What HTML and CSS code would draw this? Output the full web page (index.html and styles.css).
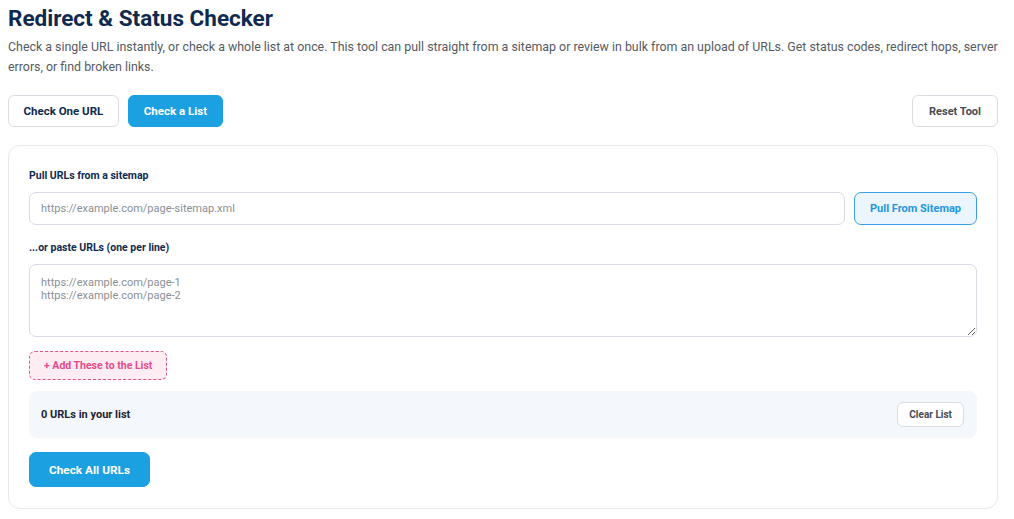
FILE: index.html
```html
<!DOCTYPE html>
<html lang="en">
<head>
<meta charset="utf-8">
<title>Redirect &amp; Status Checker</title>
<link rel="stylesheet" href="styles.css">
</head>
<body>
<div class="page">
  <h1 class="title">Redirect &amp; Status Checker</h1>
  <p class="intro">Check a single URL instantly, or check a whole list at once. This tool can pull straight from a sitemap or review in bulk from an upload of URLs. Get status codes, redirect hops, server errors, or find broken links.</p>
  <div class="toolbar">
    <div class="tabs">
      <button class="btn btn-outline">Check One URL</button>
      <button class="btn btn-primary">Check a List</button>
    </div>
    <button class="btn btn-outline btn-reset">Reset Tool</button>
  </div>
  <div class="card">
    <label class="label">Pull URLs from a sitemap</label>
    <div class="row">
      <input class="input" type="text" placeholder="https://example.com/page-sitemap.xml">
      <button class="btn btn-light">Pull From Sitemap</button>
    </div>
    <label class="label label-2">...or paste URLs (one per line)</label>
    <textarea class="textarea" placeholder="https://example.com/page-1&#10;https://example.com/page-2"></textarea>
    <button class="btn btn-add">+ Add These to the List</button>
    <div class="listbox">
      <span class="count">0 URLs in your list</span>
      <button class="btn btn-clear">Clear List</button>
    </div>
    <button class="btn btn-primary btn-check">Check All URLs</button>
  </div>
</div>
</body>
</html>
```

FILE: styles.css
```css
* { box-sizing: border-box; }
body {
  margin: 0;
  font-family: Roboto, "Liberation Sans", sans-serif;
  background: #ffffff;
  color: #0f2a4f;
}
.page {
  padding: 4px 16px 0 8px;
}
.title {
  margin: 0;
  font-size: 22.5px;
  line-height: 28px;
  font-weight: 700;
  color: #0f2a4f;
}
.intro {
  margin: 5px 0 0;
  font-size: 12.4px;
  line-height: 20px;
  color: #555b63;
}
.toolbar {
  display: flex;
  justify-content: space-between;
  align-items: center;
  margin-top: 18px;
}
.tabs { display: flex; gap: 9px; }
.btn {
  font-family: Roboto, "Liberation Sans", sans-serif;
  font-weight: 700;
  cursor: pointer;
  border-radius: 6px;
}
.btn-outline {
  height: 32px;
  padding: 0 14.5px;
  font-size: 11.5px;
  background: #fff;
  border: 1px solid #d9dde3;
  color: #0f2a4f;
}
.btn-primary {
  height: 32px;
  padding: 0 15px;
  font-size: 11.5px;
  background: #1ba1e2;
  border: 1px solid #1ba1e2;
  color: #fff;
}
.btn-reset {
  color: #454b54;
  font-size: 11px;
  padding: 0 16px;
}
.card {
  margin-top: 18px;
  border: 1px solid #e7e9ee;
  border-radius: 12px;
  padding: 23px 20px 21px 20px;
  display: flex;
  flex-direction: column;
  align-items: flex-start;
}
.label {
  font-size: 10.5px;
  font-weight: 700;
  color: #0f2a4f;
  line-height: 14px;
}
.label-2 { margin-top: 16px; }
.row {
  display: flex;
  gap: 9px;
  width: 100%;
  margin-top: 9px;
}
.input {
  flex: 1;
  height: 33px;
  border: 1px solid #d7dbe6;
  border-radius: 7px;
  padding: 0 11px;
  font-family: Roboto, "Liberation Sans", sans-serif;
  font-size: 11px;
  color: #333;
}
.input::placeholder, .textarea::placeholder { color: #8a8f96; }
.btn-light {
  height: 33px;
  padding: 0 15px;
  font-size: 11px;
  background: #eaf5fd;
  border: 1px solid #3d9fe6;
  color: #2496dc;
  border-radius: 7px;
}
.textarea {
  margin-top: 9px;
  width: 100%;
  height: 73px;
  border: 1px solid #d7dbe6;
  border-radius: 7px;
  padding: 11px 11px;
  font-family: Roboto, "Liberation Sans", sans-serif;
  font-size: 11px;
  line-height: 13px;
  resize: vertical;
}
.btn-add {
  margin-top: 14px;
  height: 29px;
  padding: 0 14px;
  font-size: 10.5px;
  background: #fdedf3;
  border: 1px dashed #e0528c;
  color: #e64b8b;
}
.listbox {
  margin-top: 11px;
  width: 100%;
  height: 47px;
  background: #f4f7fb;
  border-radius: 8px;
  display: flex;
  align-items: center;
  justify-content: space-between;
  padding: 0 13px 0 12px;
}
.count {
  font-size: 11px;
  font-weight: 700;
  color: #1c2433;
}
.btn-clear {
  height: 25px;
  padding: 0 11px;
  font-size: 10px;
  background: #fff;
  border: 1px solid #d9dde3;
  color: #454b54;
}
.btn-check {
  margin-top: 14px;
  height: 35px;
  padding: 0 19px;
  font-size: 11.8px;
  border-radius: 7px;
}
```
